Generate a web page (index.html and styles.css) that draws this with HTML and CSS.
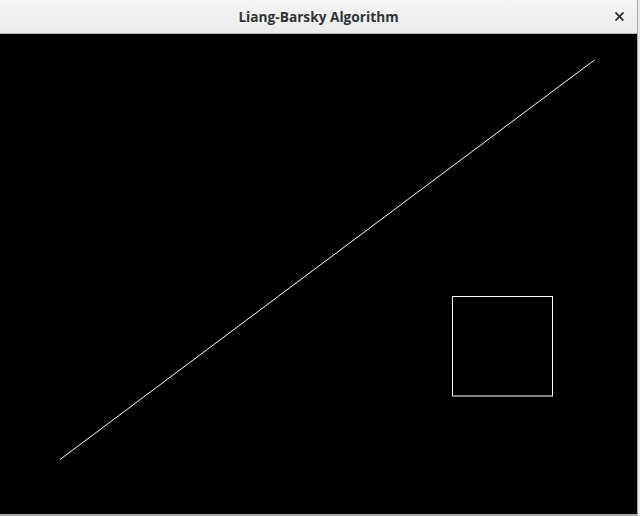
FILE: index.html
```html
<!DOCTYPE html>
<html>
<head>
<meta charset="utf-8">
<link rel="stylesheet" href="styles.css">
</head>
<body>
<div class="window">
  <div class="titlebar">
    <span class="title">Liang-Barsky Algorithm</span>
    <svg class="close" width="9" height="9" viewBox="0 0 9 9">
      <path d="M1.2 1.2 L7.8 7.8 M7.8 1.2 L1.2 7.8" stroke="#2e3436" stroke-width="1.9" stroke-linecap="square"/>
    </svg>
  </div>
  <svg class="canvas" width="637" height="480" viewBox="0 0 637 480">
    <rect width="637" height="480" fill="#000"/>
    <line x1="60" y1="425.5" x2="594.5" y2="26" stroke="#fff" stroke-width="1"/>
    <rect x="452.5" y="262.5" width="100" height="99.5" fill="none" stroke="#fff" stroke-width="1"/>
  </svg>
</div>
</body>
</html>
```
FILE: styles.css
```css
html, body {
  margin: 0;
  padding: 0;
  background: #e9e9e9;
  width: 640px;
  height: 516px;
  overflow: hidden;
}
.window {
  width: 637px;
  border-right: 1px solid #a8a8a8;
  border-bottom: 2px solid #a8a8a8;
  display: flex;
  flex-direction: column;
}
.titlebar {
  height: 33px;
  border-bottom: 1px solid #b6b6b6;
  background: linear-gradient(#f5f5f5, #ebebeb);
  display: flex;
  align-items: center;
  justify-content: center;
  position: relative;
}
.title {
  font-family: "Open Sans", "DejaVu Sans", sans-serif;
  font-weight: bold;
  font-size: 13.7px;
  color: #2e3436;
  margin-left: 0;
  margin-top: -1px;
}
.close {
  position: absolute;
  left: 615px;
  top: 12px;
}
.canvas {
  display: block;
}
```
